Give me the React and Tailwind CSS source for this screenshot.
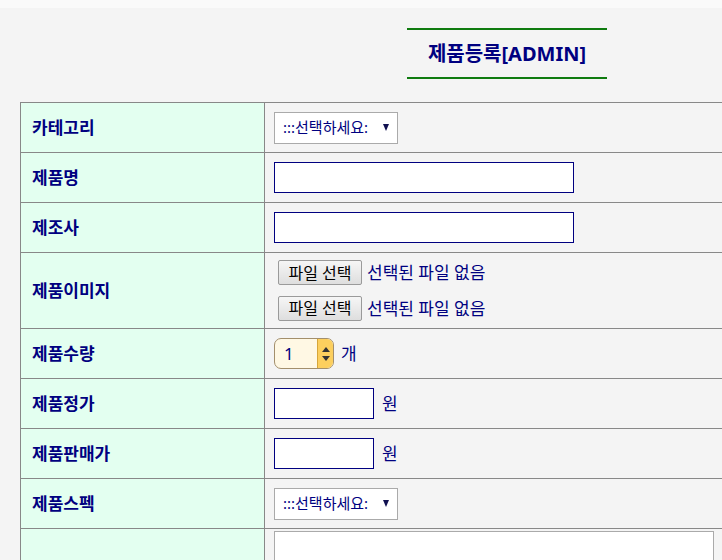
import React from "react";

const font = { fontFamily: '"Noto Sans", "Noto Sans CJK KR", sans-serif' };

function SelectBox() {
  return (
    <div className="flex h-[32px] w-[124px] items-center justify-between border border-[#aaaaaa] bg-white pl-[8px] pr-[8px] text-[15px] text-[#000080]">
      <span>:::선택하세요:</span>
      <span className="h-0 w-0 border-x-[3.5px] border-t-[7px] border-x-transparent border-t-[#101050]" />
    </div>
  );
}

function FileInput() {
  return (
    <div className="ml-[4px] flex items-center gap-[5px]">
      <button className="h-[25px] w-[84px] rounded-[2px] border border-[#9a9a9a] bg-gradient-to-b from-[#f6f6f6] to-[#dedede] text-[16px] leading-none text-black">
        파일 선택
      </button>
      <span className="text-[17px] text-[#000080]">선택된 파일 없음</span>
    </div>
  );
}

function NumberSpinner() {
  return (
    <div className="flex items-center gap-[7px]">
      <div className="flex h-[31px] w-[60px] overflow-hidden rounded-[7px] border border-[#a38f6c] bg-[#fff8e4]">
        <div className="flex flex-1 items-center pl-[9px] text-[17px] text-[#000080]">1</div>
        <div className="flex w-[16px] flex-col items-center justify-center gap-[4px] border-l border-[#d6a63a] bg-[#fccf5e]">
          <span className="h-0 w-0 border-x-[4px] border-b-[5px] border-x-transparent border-b-[#333]" />
          <span className="h-0 w-0 border-x-[4px] border-t-[5px] border-x-transparent border-t-[#333]" />
        </div>
      </div>
      <span className="text-[17px] text-[#000080]">개</span>
    </div>
  );
}

function PriceInput() {
  return (
    <div className="flex items-center gap-[8px]">
      <input className="h-[31px] w-[100px] border border-[#000080] bg-white" />
      <span className="text-[17px] text-[#000080]">원</span>
    </div>
  );
}

const rows = [
  { label: "카테고리", h: "h-[50px]", body: <SelectBox /> },
  { label: "제품명", h: "h-[50px]", body: <input className="h-[31px] w-[300px] border border-[#000080] bg-white" /> },
  { label: "제조사", h: "h-[50px]", body: <input className="h-[31px] w-[300px] border border-[#000080] bg-white" /> },
  {
    label: "제품이미지",
    h: "h-[76px]",
    body: (
      <div className="flex flex-col gap-[10px]">
        <FileInput />
        <FileInput />
      </div>
    ),
  },
  { label: "제품수량", h: "h-[50px]", body: <NumberSpinner /> },
  { label: "제품정가", h: "h-[50px]", body: <PriceInput /> },
  { label: "제품판매가", h: "h-[50px]", body: <PriceInput /> },
  { label: "제품스펙", h: "h-[50px]", body: <SelectBox /> },
  {
    label: "",
    h: "h-[130px]",
    body: <textarea className="h-[120px] w-[440px] border border-[#aaaaaa] bg-white" />,
  },
];

export default function App() {
  return (
    <div className="min-h-screen w-full overflow-hidden bg-[#f4f4f4]" style={font}>
      <div className="h-[8px] bg-[#fafafa]" />
      <div className="w-[1014px]">
        {/* TITLE */}
        <div className="mx-auto mt-[20px] flex h-[51px] w-[200px] items-center justify-center border-y-2 border-[#0f7b0f]">
          <h1 className="text-[20px] font-bold text-[#000080]">제품등록[ADMIN]</h1>
        </div>

        {/* FORM TABLE */}
        <table className="ml-[20px] mt-[23px] w-[974px] border-collapse">
          <tbody>
            {rows.map((r, i) => (
              <tr key={i} className={r.h}>
                <td className="w-[244px] border border-[#888888] bg-[#e3fff0] pl-[11px] align-middle text-[17px] font-bold text-[#000080]">
                  {r.label}
                </td>
                <td className="border border-[#888888] pl-[9px] align-middle">{r.body}</td>
              </tr>
            ))}
          </tbody>
        </table>
      </div>
    </div>
  );
}
